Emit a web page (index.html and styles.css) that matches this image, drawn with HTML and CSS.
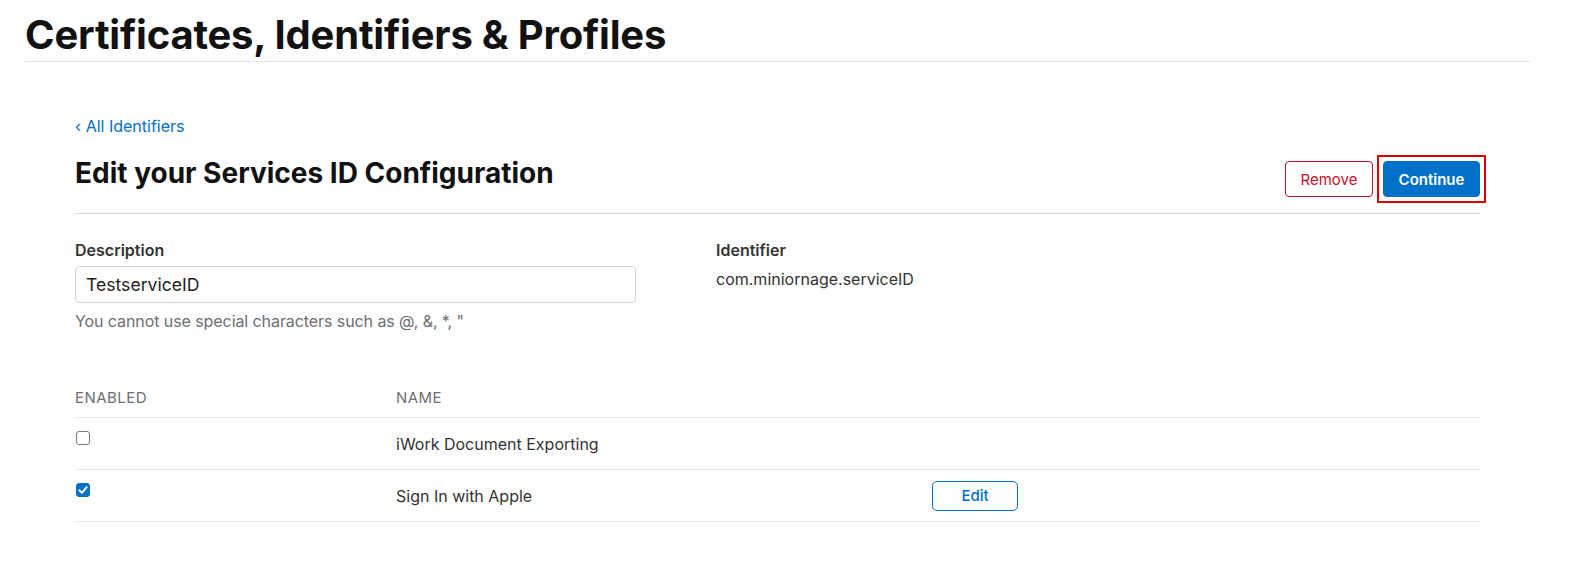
FILE: index.html
```html
<!DOCTYPE html>
<html>
<head>
<meta charset="utf-8">
<link rel="stylesheet" href="styles.css">
</head>
<body>
<header class="page-header">
  <h1 class="page-title">Certificates, Identifiers &amp; Profiles</h1>
</header>
<main class="content">
  <a class="back-link" href="#">‹ All Identifiers</a>
  <div class="title-row">
    <h2 class="section-title">Edit your Services ID Configuration</h2>
    <div class="actions">
      <button class="btn btn-remove">Remove</button>
      <span class="highlight"><button class="btn btn-continue">Continue</button></span>
    </div>
  </div>
  <div class="fields">
    <div class="field field-desc">
      <label class="field-label">Description</label>
      <div class="input">TestserviceID</div>
      <p class="hint">You cannot use special characters such as @, &amp;, *, "</p>
    </div>
    <div class="field field-id">
      <div class="field-label">Identifier</div>
      <div class="field-value">com.miniornage.serviceID</div>
    </div>
  </div>
  <div class="table">
    <div class="row head">
      <div class="col-enabled">ENABLED</div>
      <div class="col-name">NAME</div>
      <div class="col-action"></div>
    </div>
    <div class="row">
      <div class="col-enabled"><span class="checkbox"></span></div>
      <div class="col-name">iWork Document Exporting</div>
      <div class="col-action"></div>
    </div>
    <div class="row">
      <div class="col-enabled"><span class="checkbox checked"><svg viewBox="0 0 14 14" width="14" height="14"><path d="M3.3 7.3 L5.9 9.9 L10.7 4.2" fill="none" stroke="#fff" stroke-width="2" stroke-linecap="round" stroke-linejoin="round"/></svg></span></div>
      <div class="col-name">Sign In with Apple</div>
      <div class="col-action"><button class="btn btn-edit">Edit</button></div>
    </div>
  </div>
</main>
</body>
</html>
```
FILE: styles.css
```css
* { box-sizing: border-box; }
html, body { margin: 0; padding: 0; background: #fff; }
body { font-family: Inter, "Noto Sans", sans-serif; color: #1d1d1f; }

.page-header {
  margin: 0 59px 0 25px;
  border-bottom: 1px solid #e3e3e3;
  padding-top: 11px;
  height: 62px;
}
.page-title {
  margin: 0;
  font-size: 40px;
  line-height: 48px;
  font-weight: 700;
  letter-spacing: -0.005em;
  color: #111;
}

.content {
  margin: 0 109px 0 75px;
  padding-top: 54px;
}
.back-link {
  display: block;
  font-size: 16px;
  line-height: 20px;
  color: #0070c9;
  text-decoration: none;
}
.title-row {
  display: flex;
  justify-content: space-between;
  align-items: flex-start;
  border-bottom: 1px solid #d6d6d6;
  height: 70px;
  margin-top: 8px;
}
.section-title {
  margin: 0;
  padding-top: 13px;
  font-size: 28px;
  line-height: 32px;
  font-weight: 700;
  letter-spacing: 0;
  color: #111;
}
.actions {
  display: flex;
  align-items: center;
  gap: 4px;
  margin-right: -6px;
  padding-top: 11px;
}
.btn {
  font-family: inherit;
  font-size: 15px;
  border-radius: 4px;
  height: 36px;
  cursor: pointer;
}
.btn-remove {
  background: #fff;
  color: #c8102e;
  border: 1px solid #c8102e;
  width: 88px;
}
.highlight {
  display: inline-block;
  border: 2px solid #e00000;
  padding: 4px;
}
.btn-continue {
  display: block;
  background: #0070c9;
  color: #fff;
  border: 1px solid #0070c9;
  width: 97px;
  font-weight: 600;
}

.fields {
  display: flex;
  padding-top: 26px;
  height: 156px;
}
.field-desc { width: 641px; }
.field-label {
  display: block;
  font-size: 16px;
  line-height: 20px;
  font-weight: 600;
  color: #333;
}
.input {
  margin-top: 6px;
  width: 561px;
  height: 37px;
  border: 1px solid #d2d2d7;
  border-radius: 4px;
  padding: 0 10px;
  font-size: 17.6px;
  line-height: 35px;
  color: #1d1d1f;
}
.hint {
  margin: 8px 0 0;
  font-size: 16px;
  line-height: 20px;
  letter-spacing: -0.005em;
  color: #6e6e73;
}
.field-value {
  margin-top: 9px;
  font-size: 16px;
  line-height: 20px;
  color: #333;
}

.table { width: 100%; }
.row {
  display: flex;
  align-items: center;
  border-bottom: 1px solid #e6e6e6;
  height: 52px;
  font-size: 16px;
  color: #333;
}
.row.head {
  height: 48px;
  align-items: flex-start;
  padding-top: 18px;
  font-size: 15px;
  color: #6e6e73;
  letter-spacing: 0.03em;
}
.col-enabled { width: 321px; }
.col-name { width: 536px; }
.col-action { flex: 1; display: flex; }
.checkbox {
  display: block;
  width: 14px;
  height: 14px;
  border: 1px solid #777;
  border-radius: 3px;
  margin-left: 1px;
  margin-top: -12px;
  background: #fff;
}
.checkbox.checked {
  background: #0070c9;
  border-color: #0070c9;
}
.checkbox svg { display: block; margin: -1px; }
.btn-edit {
  background: #fff;
  color: #0070c9;
  border: 1px solid #0070c9;
  border-radius: 5px;
  width: 86px;
  height: 30px;
  font-weight: 500;
}
```
